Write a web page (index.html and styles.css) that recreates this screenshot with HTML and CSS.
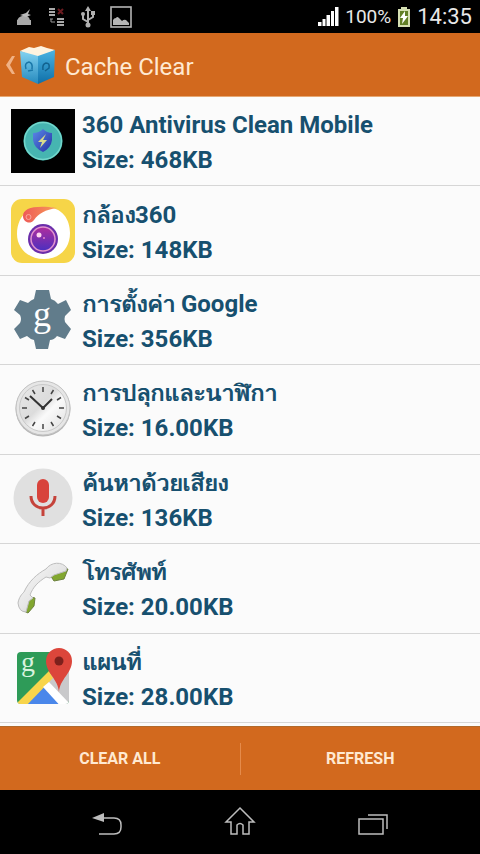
FILE: index.html
```html
<!DOCTYPE html>
<html lang="th">
<head>
  <meta charset="UTF-8">
  <meta name="viewport" content="width=device-width, initial-scale=1.0">
  <title>Cache Clear</title>
  <link rel="stylesheet" href="styles.css">
</head>
<body>
  <div class="status-bar">
    <svg class="status-icon" viewBox="0 0 20 22" aria-hidden="true">
      <path d="M3 19V15Q4 11 8 10H13Q16 11 17 19H13V16H11V19Z" fill="#a9a9a9"/>
      <path d="M3 14H17V19H3Z" fill="#a9a9a9"/>
      <path d="M6 9L12 7L16 3L14 8L17 9L12 11Z" fill="#bbb"/>
    </svg>
    <svg class="status-icon" viewBox="0 0 20 22" aria-hidden="true">
      <path d="M3 3H9M3 6H9M3 9H9M11 13H18M11 16H18M11 19H18" stroke="#a9a9a9" stroke-width="2"/>
      <path d="M12 3L17 8M17 3L12 8" stroke="#6b1b20" stroke-width="2"/>
      <path d="M4 13H7M5 13V16H9" stroke="#999" fill="none"/>
    </svg>
    <svg class="status-icon" viewBox="0 0 20 22" aria-hidden="true">
      <path d="M10 4V19M10 16L5 13V9M10 14L15 11V8" stroke="#b0b0b0" stroke-width="2" fill="none"/>
      <path d="M10 0L13 5H7Z M13 5H17V9H13Z" fill="#b0b0b0"/>
      <circle cx="5" cy="8" r="2" fill="#b0b0b0"/>
      <circle cx="10" cy="19" r="2.500" fill="#b0b0b0"/>
    </svg>
    <svg class="status-icon picture" viewBox="0 0 22 22" aria-hidden="true">
      <rect x="1" y="1" width="20" height="20" stroke="#b5b5b5" stroke-width="1.600" fill="none"/>
      <path d="M3 19V14Q4 12 6 12Q7 10 9 12L12 15Q14 13 16 14L19 17V19Z" fill="#b5b5b5"/>
    </svg>
    <div class="status-right">
      <svg class="signal" viewBox="0 0 21 20" aria-hidden="true">
        <path d="M0 15H3.500V19H0ZM4.500 12H7.500V19H4.500ZM8.500 8H12V19H8.500ZM13 4H16V19H13ZM17 0H20.500V19H17Z" fill="#fff"/>
      </svg>
      <span class="percent">100%</span>
      <svg class="battery" viewBox="0 0 14 20" aria-hidden="true">
        <path d="M4 0H10V2H13V20H1V2H4Z" fill="#d5dfb2"/>
        <path d="M3 4H11V18H3Z" fill="#627f26"/>
        <path d="M8 4L3 11H6L5 17L11 9H8Z" fill="#fff"/>
      </svg>
      <span class="time">14:35</span>
    </div>
  </div>

  <header class="action-bar">
    <a class="up" href="#" aria-label="Back">
      <svg class="chevron" viewBox="0 0 10 20" aria-hidden="true">
        <path d="M7 1H10L5 10L10 19H7L1 10Z" fill="#f0b184"/>
      </svg>
      <svg class="logo" viewBox="0 0 38 40" aria-hidden="true">
        <defs>
          <linearGradient id="boxLeft" x1="0" y1="0" x2="0" y2="1">
            <stop offset="0" stop-color="#83d3f2"/>
            <stop offset="1" stop-color="#2589bd"/>
          </linearGradient>
          <linearGradient id="boxRight" x1="0" y1="0" x2="0" y2="1">
            <stop offset="0" stop-color="#4bb3e2"/>
            <stop offset="1" stop-color="#0e6fa8"/>
          </linearGradient>
        </defs>
        <path d="M1 6L10 2L15 3L22 1L28 3L36 5L19 13Z" fill="#fff3df"/>
        <path d="M1 6L19 11V39L3 32Z" fill="url(#boxLeft)"/>
        <path d="M36 5L19 11V39L35 32Z" fill="url(#boxRight)"/>
        <path d="M7 24Q5 18 10 17Q14 18 13 24M14 25L9 26" stroke="#1976a8" stroke-width="1.500" fill="none"/>
        <path d="M24 25Q23 19 27 18Q31 18 30 23L26 26" stroke="#12628f" stroke-width="1.500" fill="none"/>
      </svg>
    </a>
    <h1>Cache Clear</h1>
  </header>

  <ul class="app-list">
    <li class="app">
      <svg class="app-icon" viewBox="0 0 64 64" aria-hidden="true">
        <defs>
          <linearGradient id="shield" x1="0" y1="0" x2="1" y2="1">
            <stop offset="0" stop-color="#5b8be8"/>
            <stop offset="1" stop-color="#2431a5"/>
          </linearGradient>
        </defs>
        <rect width="64" height="64" fill="#000"/>
        <circle cx="32" cy="32" r="19.500" fill="#2fa59f"/>
        <circle cx="32" cy="32" r="18.500" fill="#46b5b1" stroke="#74d6cb" stroke-width="1.500"/>
        <path d="M32 20Q36 24 41 24V31Q40 39 32 43Q23 39 22 31V24Q28 24 32 20Z" fill="url(#shield)"/>
        <path d="M35 25L27 33H31L29 39L36 31H32Z" fill="#d9dc8b"/>
      </svg>
      <div class="app-text">
        <h2>360 Antivirus Clean Mobile</h2>
        <p>Size: 468KB</p>
      </div>
    </li>
    <li class="app">
      <svg class="app-icon" viewBox="0 0 64 64" aria-hidden="true">
        <defs>
          <linearGradient id="lens" x1="0" y1="0" x2="0" y2="1">
            <stop offset="0" stop-color="#b02d9d"/>
            <stop offset="1" stop-color="#4a2fc0"/>
          </linearGradient>
          <linearGradient id="flame" x1="0" y1="0" x2="1" y2="0">
            <stop offset="0" stop-color="#ee5a58"/>
            <stop offset="1" stop-color="#f79b57"/>
          </linearGradient>
        </defs>
        <rect width="64" height="64" rx="11" fill="#f6d548"/>
        <path d="M18 21L32 8C51 7 59 20 59 34C59 50 48 60 33 60C17 60 6 49 6 35C6 25 10 16 17 12Z" fill="#fff"/>
        <path d="M12 17C12 9 24 6 46 9C34 11 28 14 23 21C19 26 12 23 12 17Z" fill="url(#flame)"/>
        <circle cx="17.500" cy="18" r="2.500" fill="none" stroke="#fba69b"/>
        <circle cx="32" cy="40" r="15" fill="#6b2eaa"/>
        <circle cx="32" cy="40" r="12" fill="url(#lens)" stroke="#e394cf" stroke-width="1.500"/>
        <circle cx="28" cy="36" r="2.500" fill="#ffd4ef"/>
        <circle cx="33" cy="39" r="1" fill="#e783c9"/>
      </svg>
      <div class="app-text">
        <h2><span class="thai">กล้อง</span>360</h2>
        <p>Size: 148KB</p>
      </div>
    </li>
    <li class="app">
      <svg class="app-icon" viewBox="0 0 64 64" aria-hidden="true">
        <path d="M25 2H38L40 11Q44 12 47 16L55 12L60 22L54 28Q53 31 54 34L60 41L54 51L46 48Q43 52 39 52L37 61H25L23 52Q19 51 16 48L9 51L3 41L9 35Q11 31 9 27L3 22L9 12L17 15Q20 12 23 11Z" fill="#617c8b"/>
        <text class="letter" x="31" y="38" font-size="36" text-anchor="middle" fill="#fff">g</text>
      </svg>
      <div class="app-text">
        <h2><span class="thai">การตั้งค่า</span> Google</h2>
        <p>Size: 356KB</p>
      </div>
    </li>
    <li class="app">
      <svg class="app-icon" viewBox="0 0 64 64" aria-hidden="true">
        <defs>
          <linearGradient id="face" x1="0" y1="0" x2="1" y2="1">
            <stop offset="0" stop-color="#e8e8e8"/>
            <stop offset=".45" stop-color="#dcdcdc"/>
            <stop offset=".6" stop-color="#fafafa"/>
            <stop offset="1" stop-color="#dedede"/>
          </linearGradient>
        </defs>
        <circle cx="32" cy="32" r="27.500" fill="#b5b5b5"/>
        <circle cx="32" cy="31" r="27" fill="#e6e6e6" stroke="#c3c3c3"/>
        <circle cx="32" cy="31" r="23.500" fill="url(#face)" stroke="#c9c9c9"/>
        <g stroke="#444" stroke-width="1.500">
          <path d="M32 10V15M32 47V52M11 31H16M48 31H53"/>
          <path d="M21.500 13L24 17M42.500 13L40 17M14 20.500L18 23M50 20.500L46 23M14 41.500L18 39M50 41.500L46 39M21.500 49L24 45M42.500 49L40 45"/>
        </g>
        <path d="M19 19L32 31L41 22" fill="none" stroke="#333" stroke-width="2"/>
        <circle cx="32" cy="31" r="2" fill="#333"/>
      </svg>
      <div class="app-text">
        <h2><span class="thai">การปลุกและนาฬิกา</span></h2>
        <p>Size: 16.00KB</p>
      </div>
    </li>
    <li class="app">
      <svg class="app-icon" viewBox="0 0 64 64" aria-hidden="true">
        <circle cx="32" cy="31" r="29.500" fill="#e0e0e0"/>
        <rect x="26" y="12" width="12" height="24" rx="6" fill="#d8433b"/>
        <path d="M20 29C20 45 44 45 44 29M32 41V49" fill="none" stroke="#c5433b" stroke-width="3"/>
      </svg>
      <div class="app-text">
        <h2><span class="thai">ค้นหาด้วยเสียง</span></h2>
        <p>Size: 136KB</p>
      </div>
    </li>
    <li class="app">
      <svg class="app-icon" viewBox="0 0 64 64" aria-hidden="true">
        <defs>
          <linearGradient id="handset" x1="0" y1="0" x2="1" y2="1">
            <stop offset="0" stop-color="#f9f9f9"/>
            <stop offset=".5" stop-color="#e6e6e6"/>
            <stop offset="1" stop-color="#b5b5b5"/>
          </linearGradient>
        </defs>
        <path d="M39 19L43 25L53 23L57 13L50 12ZM15 40L24 42L23 50L17 57L11 54Z" fill="#82a72f" stroke="#6d8140"/>
        <path d="M7 47C8 41 11 38 13 36C18 25 26 18 35 13C40 6 51 5 56 12L55 15L43 19L39 22L35 21C27 26 22 31 19 39L22 42L18 45L15 56Q8 56 7 47Z" fill="url(#handset)" stroke="#bdbdbd"/>
      </svg>
      <div class="app-text">
        <h2><span class="thai">โทรศัพท์</span></h2>
        <p>Size: 20.00KB</p>
      </div>
    </li>
    <li class="app">
      <svg class="app-icon" viewBox="0 0 64 64" aria-hidden="true">
        <defs>
          <clipPath id="tile"><rect x="6" y="6" width="52" height="52" rx="4"/></clipPath>
        </defs>
        <g clip-path="url(#tile)">
          <rect x="6" y="6" width="52" height="52" fill="#2e9b58"/>
          <path d="M36 29L58 20V60H6Z" fill="#c9c9cb"/>
          <path d="M32 39L50 60H12Z" fill="#4a87ea"/>
          <path d="M5 58L38 25L42 32L15 60H5Z" fill="#f8d54b"/>
          <path d="M38 36L58 57V64H53L32 41Z" fill="#fff"/>
        </g>
        <text class="letter" x="17" y="25" font-size="28" text-anchor="middle" fill="#d9f3df">g</text>
        <path d="M48 46C47 33 35 27 35 15A13 13 0 0 1 61 15C61 27 49 33 48 46Z" fill="#dc463b"/>
        <circle cx="48" cy="15" r="4.500" fill="#7d201c"/>
      </svg>
      <div class="app-text">
        <h2><span class="thai">แผนที่</span></h2>
        <p>Size: 28.00KB</p>
      </div>
    </li>
  </ul>

  <div class="actions">
    <button type="button">CLEAR ALL</button>
    <button type="button">REFRESH</button>
  </div>

  <nav class="nav-bar">
    <button type="button" aria-label="Back">
      <svg viewBox="0 0 32 32" aria-hidden="true">
        <path d="M1 12L13 7V16Z" fill="#bdbdbd"/>
        <path d="M13 12H23Q30 12 30 19V21Q30 28 23 28H8" fill="none" stroke="#bdbdbd" stroke-width="1.500"/>
      </svg>
    </button>
    <button type="button" aria-label="Home">
      <svg viewBox="0 0 32 32" aria-hidden="true">
        <path d="M16 2L30 16H25V28H19V19Q16 16 13 19V28H7V16H2Z" fill="none" stroke="#bdbdbd" stroke-width="1.500"/>
      </svg>
    </button>
    <button type="button" aria-label="Recent apps">
      <svg viewBox="0 0 32 32" aria-hidden="true">
        <path d="M2 13H26V28H2ZM11 9H30V23" fill="none" stroke="#bdbdbd" stroke-width="1.500"/>
      </svg>
    </button>
  </nav>
</body>
</html>
```

FILE: styles.css
```css
* {
  box-sizing: border-box;
}
body {
  display: flex;
  flex-direction: column;
  min-height: 100vh;
  margin: 0;
  background-color: #fbfbfb;
  font-family: Roboto, "Noto Sans", sans-serif;
}
h1, h2, p, ul {
  margin: 0;
  padding: 0;
}
button {
  padding: 0;
  border: none;
  background: none;
  font-family: inherit;
  cursor: pointer;
}
svg {
  display: block;
  flex: none;
}
.status-bar {
  display: flex;
  align-items: center;
  gap: 12px;
  height: 33px;
  padding: 0 8px 0 14px;
  background-color: #000;
  color: #e8e8e8;
}
.status-icon {
  width: 20px;
  height: 22px;
}
.picture {
  width: 22px;
}
.status-right {
  display: flex;
  align-items: center;
  gap: 6px;
  margin-left: auto;
}
.signal {
  width: 21px;
  height: 20px;
}
.percent {
  font-size: 19px;
}
.battery {
  width: 14px;
  height: 20px;
}
.time {
  font-size: 22px;
}
.action-bar {
  display: flex;
  align-items: center;
  gap: 8px;
  height: 64px;
  padding-left: 5px;
  border-bottom: 1px solid #e6a873;
  background-color: #d2691e;
}
.up {
  display: flex;
  align-items: center;
  gap: 4px;
}
.chevron {
  width: 10px;
  height: 20px;
}
.logo {
  width: 38px;
  height: 40px;
}
h1 {
  padding-top: 4px;
  color: #ffe9d2;
  font-size: 24px;
  font-weight: 400;
}
.app-list {
  display: flex;
  flex: 1;
  flex-direction: column;
  padding-bottom: 3px;
  list-style: none;
}
.app {
  display: flex;
  flex: 1;
  align-items: center;
  gap: 7px;
  padding: 0 11px;
  border-bottom: 1px solid #d6d6d6;
}
.app-icon {
  width: 64px;
  height: 64px;
}
.letter {
  font-family: "Liberation Serif", serif;
}
.app-text {
  padding-top: 4px;
  color: #17506f;
}
.app-text h2, .app-text p {
  font-size: 24px;
  font-weight: 700;
  line-height: 35px;
  white-space: nowrap;
}
/* thin loops of the Thai face, thickened a little */
.thai {
  font-size: 23px;
  font-weight: 500;
  text-shadow: 1px 0 #17506f;
}
.actions {
  display: flex;
  align-items: center;
  height: 64px;
  border-top: 1px solid #b06a2c;
  background-color: #d2691e;
}
.actions button {
  flex: 1;
  height: 32px;
  color: #ffe9d2;
  font-size: 16px;
  font-weight: 700;
}
.actions button + button {
  border-left: 1px solid #e58b4b;
}
.nav-bar {
  display: flex;
  align-items: center;
  justify-content: center;
  gap: 101px;
  height: 64px;
  background-color: #000;
}
.nav-bar svg {
  width: 32px;
  height: 32px;
}
```
